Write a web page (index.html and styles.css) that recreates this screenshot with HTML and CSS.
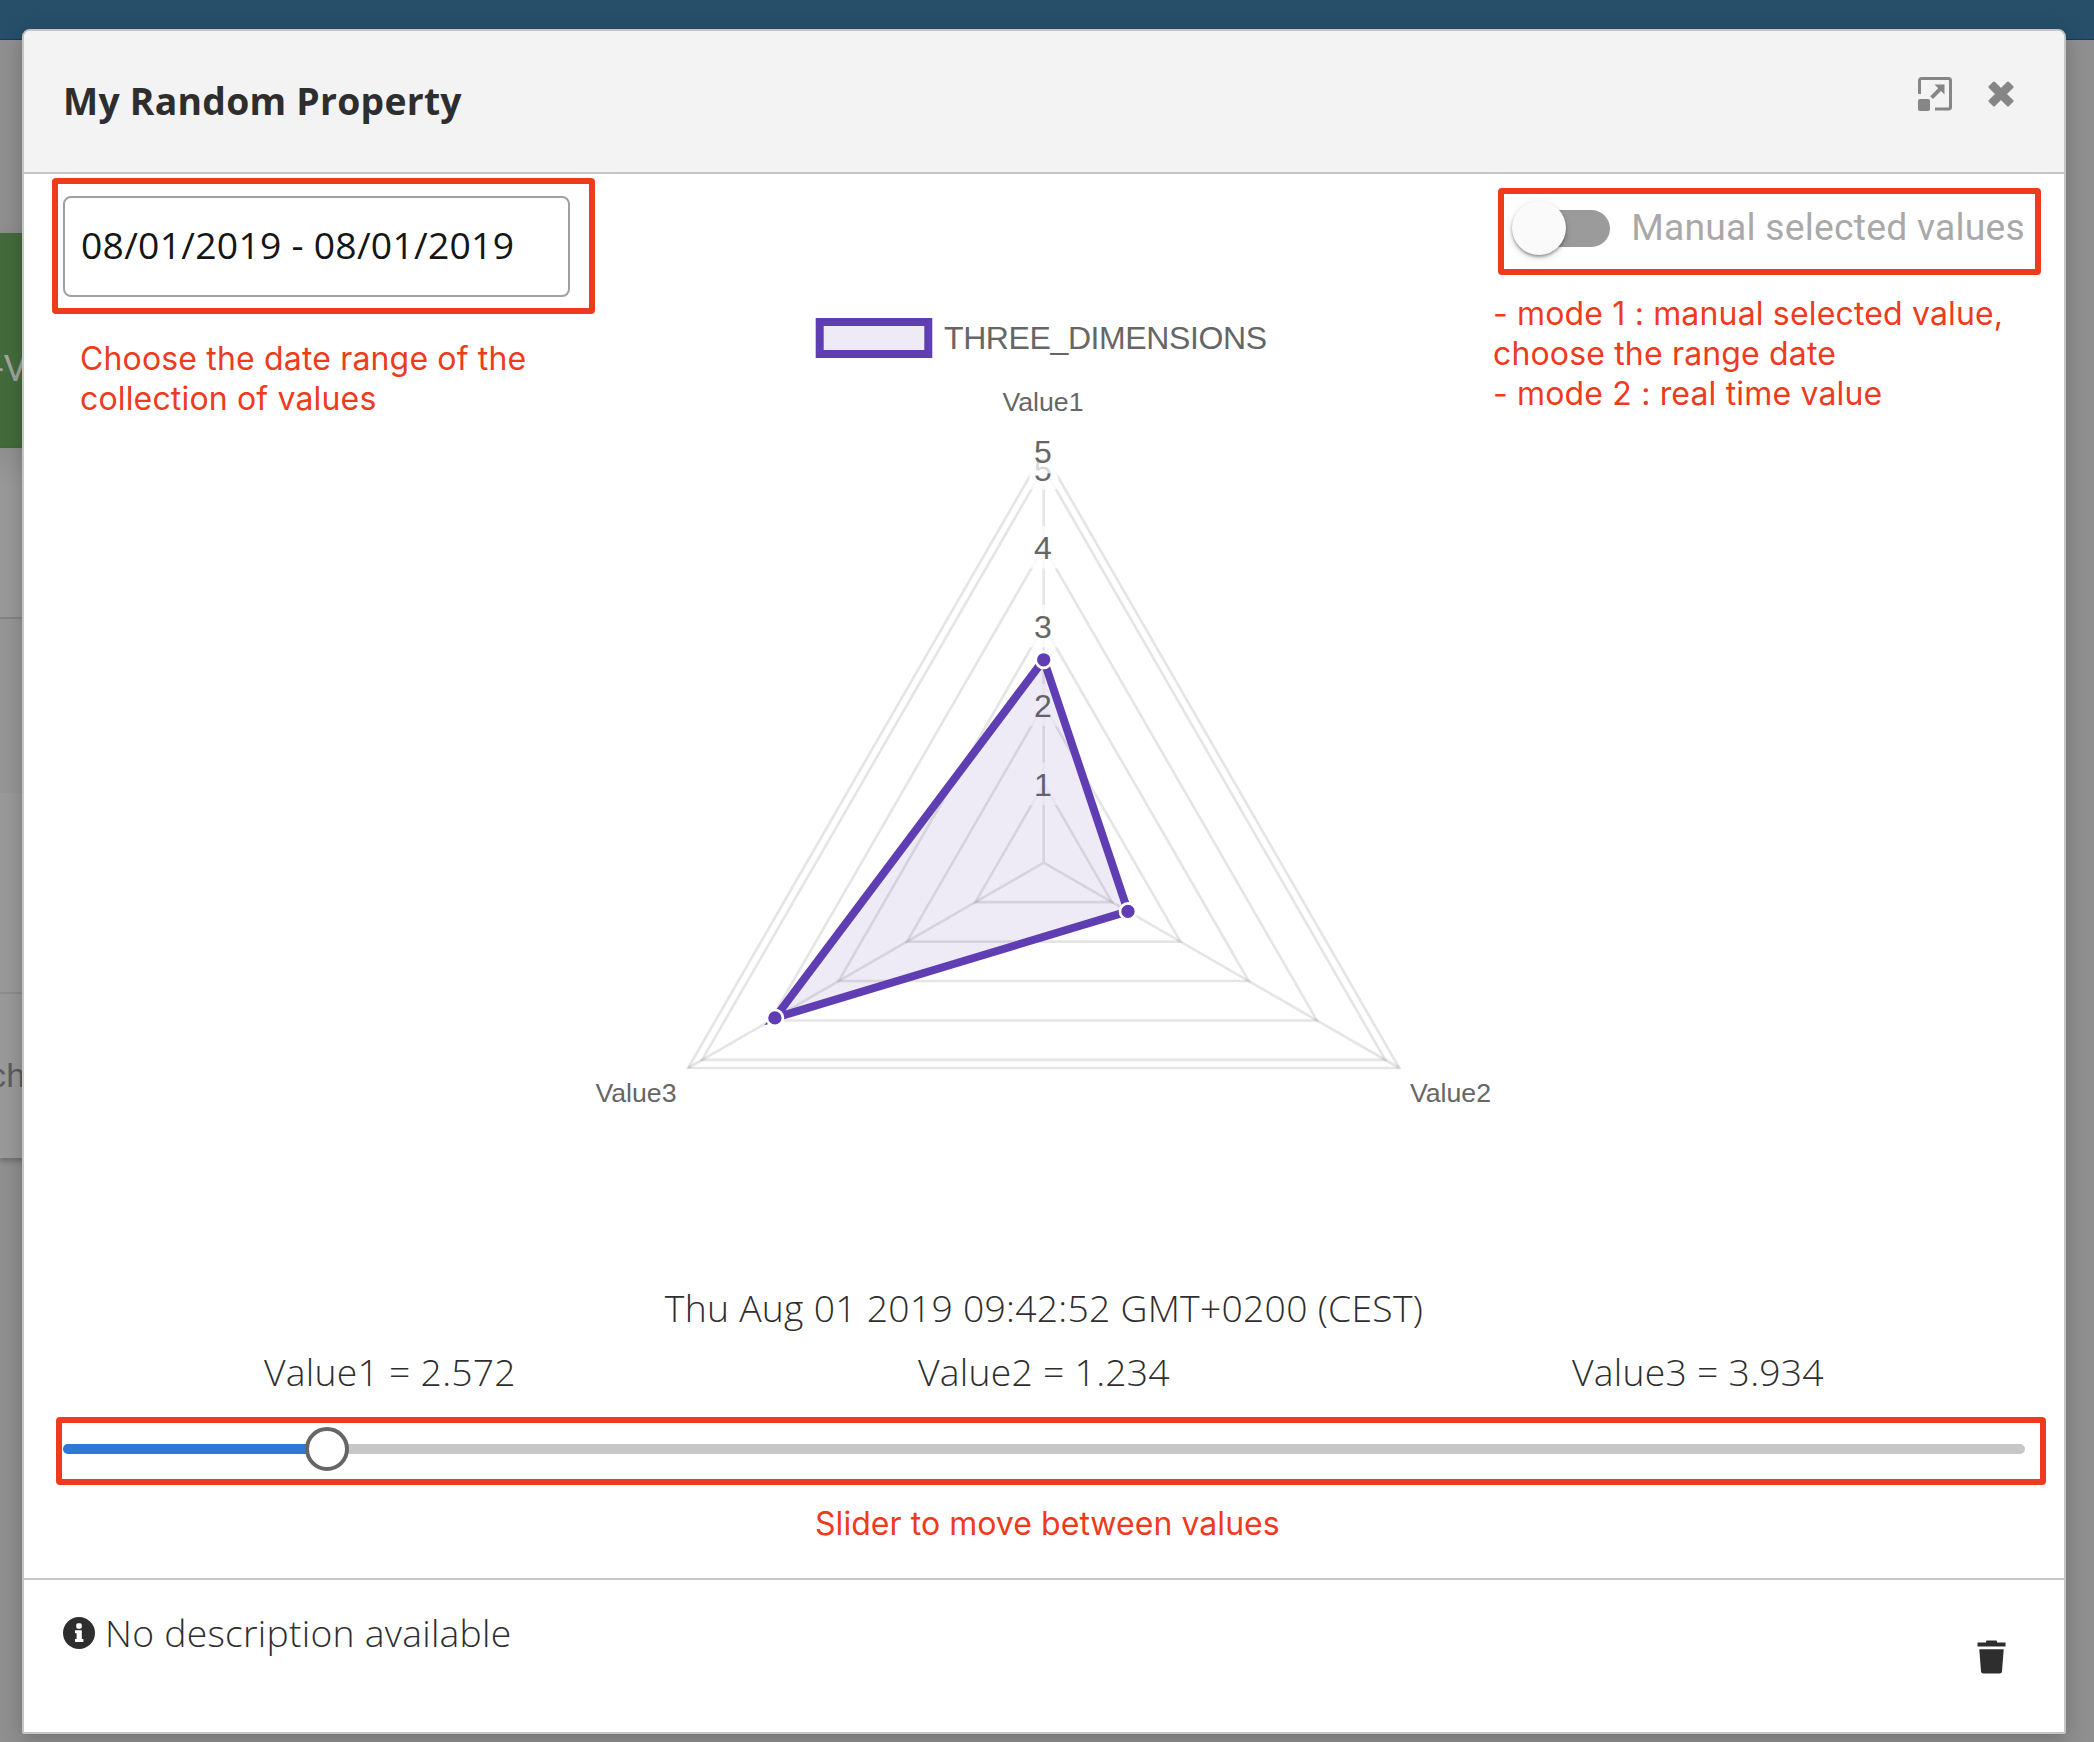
FILE: index.html
```html
<!DOCTYPE html>
<html lang="en">
<head>
<meta charset="utf-8">
<title>My Random Property</title>
<link rel="stylesheet" href="styles.css">
</head>
<body>
<div class="page">
  <div class="topbar"></div>
  <div class="tile"><span>-V</span></div>
  <div class="card">
    <div class="card-row row-a"></div>
    <div class="card-row row-b"></div>
    <div class="card-row row-c"></div>
    <div class="card-row row-d"><span>ch</span></div>
  </div>
</div>

<section class="modal">
  <header class="modal-header">
    <h1>My Random Property</h1>
    <div class="actions">
      <svg class="icon-resize" viewBox="0 0 34 34" width="34" height="34">
        <path d="M1.5 17V3.5a2 2 0 0 1 2-2h27a2 2 0 0 1 2 2v26.5a2 2 0 0 1-2 2H17" fill="none" stroke="#868686" stroke-width="3"/>
        <rect x="0" y="22" width="12" height="12" rx="2" fill="#868686"/>
        <path d="M16.5 7.5H26.5V17.5L23 14L15 22L12.2 19.2L20.2 11.2Z" fill="#868686"/>
      </svg>
      <svg class="icon-close" viewBox="0 0 26 26" width="26" height="26">
        <path d="M6 2L13 9L20 2L24 6L17 13L24 20L20 24L13 17L6 24L2 20L9 13L2 6Z" fill="#868686" stroke="#868686" stroke-width="3" stroke-linejoin="round"/>
      </svg>
    </div>
  </header>

  <div class="modal-body">
    <div class="controls">
      <div class="date-input">08/01/2019 - 08/01/2019</div>
      <div class="toggle">
        <div class="switch"><div class="thumb"></div></div>
        <span class="toggle-label">Manual selected values</span>
      </div>
    </div>

    <svg class="chart" viewBox="63 300 1962 970" width="1962" height="970">
      <rect x="819.7" y="322" width="108.6" height="32" fill="#eeebf7" stroke="#5f3eb3" stroke-width="8"/>
      <text class="legend" x="944" y="349" textLength="323">THREE_DIMENSIONS</text>
      <g class="grid">
        <path d="M1043.7 783.8L1112 902.1H975.4Z"/>
        <path d="M1043.7 704.9L1180.4 941.6H907Z"/>
        <path d="M1043.7 626L1248.7 981H838.7Z"/>
        <path d="M1043.7 547.1L1317 1020.5H770.4Z"/>
        <path d="M1043.7 468.2L1385.3 1059.9H702.1Z"/>
        <path d="M1043.7 452.1L1399.3 1068H688.1Z"/>
        <path d="M1043.7 862.7V452.1M1043.7 862.7L1399.3 1068M1043.7 862.7L688.1 1068"/>
      </g>
      <g class="tick">
        <rect x="1029.5" y="762.5" width="28.4" height="42.6"/><text x="1043" y="796.2">1</text>
        <rect x="1029.5" y="683.6" width="28.4" height="42.6"/><text x="1043" y="717.3">2</text>
        <rect x="1029.5" y="604.7" width="28.4" height="42.6"/><text x="1043" y="638">3</text>
        <rect x="1029.5" y="525.8" width="28.4" height="42.6"/><text x="1043" y="559">4</text>
        <rect x="1029.5" y="446.9" width="28.4" height="42.6"/><text x="1043" y="480.5">5</text>
        <rect x="1029.5" y="430.8" width="28.4" height="42.6"/><text x="1043" y="462.8">5</text>
      </g>
      <g class="axis">
        <text x="1043" y="411.3">Value1</text>
        <text x="1450.5" y="1102">Value2</text>
        <text x="636" y="1102">Value3</text>
      </g>
      <path class="series" d="M1043.7 659.8L1128 911.4L774.9 1017.9Z"/>
      <g class="points">
        <circle cx="1043.7" cy="659.8" r="8"/>
        <circle cx="1128" cy="911.4" r="8"/>
        <circle cx="774.9" cy="1017.9" r="8"/>
      </g>
    </svg>

    <div class="timestamp">Thu Aug 01 2019 09:42:52 GMT+0200 (CEST)</div>
    <div class="values">
      <span>Value1 = 2.572</span>
      <span>Value2 = 1.234</span>
      <span>Value3 = 3.934</span>
    </div>
    <div class="slider"><div class="fill"></div><div class="knob"></div></div>
  </div>

  <footer class="modal-footer">
    <div class="description">
      <svg viewBox="0 0 32 32" width="32" height="32">
        <circle cx="16" cy="16" r="16" fill="#2e2e2e"/>
        <rect x="13.2" y="6.3" width="5.6" height="5.4" rx="1.8" fill="#fff"/>
        <path d="M12 13.3H18.8V22H20.4V25H12V22H13.6V16.3H12Z" fill="#fff"/>
      </svg>
      <span>No description available</span>
    </div>
    <svg class="icon-trash" viewBox="0 0 29 34" width="29" height="34">
      <path d="M9 2.5V1.5Q9 .5 10 .5H19Q20 .5 20 1.5V2.5H28.5V6.5H.5V2.5ZM2.3 9.3H26.7L25 31.5Q24.8 33.5 22.8 33.5H6.2Q4.2 33.5 4 31.5Z" fill="#2e2e2e"/>
    </svg>
  </footer>
</section>

<div class="frame frame-date"></div>
<div class="frame frame-mode"></div>
<div class="frame frame-slider"></div>
<p class="note note-date">Choose the date range of the<br>collection of values</p>
<p class="note note-mode">- mode 1 : manual selected value,<br>choose the range date<br>- mode 2 : real time value</p>
<p class="note note-slider">Slider to move between values</p>
</body>
</html>
```
FILE: styles.css
```css
* { box-sizing: border-box; }

body {
  margin: 0;
  position: relative;
  width: 2094px;
  height: 1742px;
  overflow: hidden;
  font-family: "Open Sans", sans-serif;
  font-size: 37.3px;
  letter-spacing: .26px;
  color: #2e2e2e;
}

.page {
  height: 1742px;
  background: #8f8f8f;
}

.topbar {
  height: 40px;
  background: #274f6a;
  border-bottom: 1px solid #0c3f63;
}

.tile {
  width: 60px;
  height: 215px;
  margin-top: 193px;
  background: #446b3c;
  box-shadow: 0 4px 14px rgba(0, 0, 0, .12);
  color: #a0a39e;
  font: 37.3px/215px Roboto, sans-serif;
}

.tile span { display: block; margin-left: -7px; padding-top: 28px; }

.card {
  width: 60px;
  height: 710px;
  background: linear-gradient(#8f8f8f, #999 40px);
  box-shadow: 0 3px 6px rgba(0, 0, 0, .25);
}

.card-row { overflow: hidden; }
.row-a { height: 171px; border-bottom: 2px solid #848484; }
.row-b { height: 174px; background: #959595; }
.row-c { height: 201px; border-bottom: 2px solid #8c8c8c; }

.row-d {
  height: 164px;
  color: #5c5c5c;
  font: 34px/163px "Liberation Sans", Arial, sans-serif;
}

.row-d span { margin-left: -11px; }

.modal {
  position: absolute;
  left: 22px;
  top: 29px;
  width: 2044px;
  height: 1705px;
  display: flex;
  flex-direction: column;
  background: #fff;
  border: 2px solid #c5c5c5;
  border-radius: 8px 8px 2px 2px;
  box-shadow: 0 5px 20px rgba(0, 0, 0, .22);
}

.modal-header {
  display: flex;
  justify-content: space-between;
  height: 143px;
  padding: 46px 50px 0 39px;
  background: #f3f3f3;
  border-bottom: 2px solid #c5c5c5;
  border-radius: 6px 6px 0 0;
}

h1 {
  margin: -1px 0 0;
  font-size: 37.3px;
  font-weight: 700;
  line-height: 50px;
}

.actions { display: flex; gap: 36px; }
.icon-close { margin-top: 4px; }

.modal-body {
  height: 1406px;
  padding: 22px 39px 0;
  border-bottom: 2px solid #c5c5c5;
}

.controls {
  display: flex;
  justify-content: space-between;
  height: 104px;
}

.date-input {
  width: 507px;
  height: 101px;
  padding-left: 16px;
  border: 2px solid #a0a0a0;
  border-radius: 8px;
  line-height: 94px;
  color: #151515;
}

.toggle {
  display: flex;
  align-items: center;
  height: 64px;
}

.switch {
  width: 96px;
  height: 37px;
  margin-right: 21px;
  border-radius: 19px;
  background: #9b9b9b;
  display: flex;
  align-items: center;
}

.thumb {
  flex: none;
  width: 54px;
  height: 54px;
  margin-left: -2px;
  border-radius: 50%;
  background: #fafafa;
  box-shadow: 0 2px 3px rgba(0, 0, 0, .35), 0 3px 8px rgba(0, 0, 0, .12);
}

.toggle-label {
  margin-top: -2px;
  font-family: Roboto, sans-serif;
  letter-spacing: .22px;
  color: #a9a9a9;
}

.chart {
  display: block;
  font-family: "Liberation Sans", Arial, sans-serif;
  letter-spacing: 0;
}

.chart text { fill: #666; }
.legend { font-size: 32px; }
.grid path { fill: none; stroke: rgba(0, 0, 0, .1); stroke-width: 2.67; }
.tick rect { fill: rgba(255, 255, 255, .75); }
.tick text { font-size: 32px; text-anchor: middle; }
.axis text { font-size: 26.7px; text-anchor: middle; }
.series { fill: rgba(85, 62, 179, .1); stroke: #5f3eb3; stroke-width: 8; stroke-miterlimit: 10; }
.points circle { fill: #5f3eb3; stroke: #fff; stroke-width: 2.67; }

.timestamp {
  margin-top: 12px;
  font-weight: 300;
  line-height: 52px;
  text-align: center;
}

.values {
  display: grid;
  grid-template-columns: repeat(3, 1fr);
  margin-top: 12px;
  font-weight: 300;
  line-height: 52px;
  text-align: center;
}

.slider {
  display: flex;
  align-items: center;
  height: 10px;
  margin-top: 46px;
  border-radius: 5px;
  background: #c7c7c7;
}

.fill { width: 244px; height: 10px; border-radius: 5px 0 0 5px; background: #2c7ad6; }

.knob {
  flex: none;
  width: 44px;
  height: 44px;
  margin-left: -2px;
  border: 4px solid #666;
  border-radius: 50%;
  background: #fff;
}

.modal-footer {
  display: flex;
  justify-content: space-between;
  padding: 27px 58px 0 39px;
  font-weight: 300;
}

.description { display: flex; gap: 10px; line-height: 51px; }
.description svg { margin-top: 10px; }
.icon-trash { margin-top: 33px; }

.frame {
  position: absolute;
  border: 6px solid #ee3b20;
  border-radius: 4px;
}

.frame-date { left: 52px; top: 178px; width: 543px; height: 136px; }
.frame-mode { left: 1498px; top: 188px; width: 543px; height: 87px; }
.frame-slider { left: 56px; top: 1417px; width: 1990px; height: 68px; }

.note {
  position: absolute;
  margin: 0;
  font: 32px/40px Inter, sans-serif;
  letter-spacing: .16px;
  color: #ee3b20;
  white-space: nowrap;
}

.note-date { left: 80px; top: 339px; }
.note-mode { left: 1493px; top: 294px; }
.note-slider { left: 815px; top: 1504px; letter-spacing: .05px; }
```
